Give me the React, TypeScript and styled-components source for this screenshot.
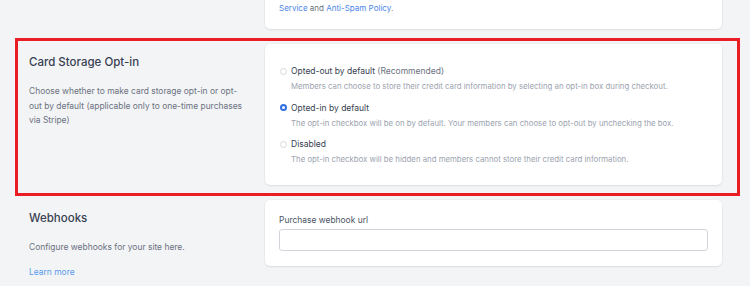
import React from 'react'
import styled, { createGlobalStyle } from 'styled-components'

const GlobalStyle = createGlobalStyle`
  html, body {
    margin: 0;
    padding: 0;
    background: #f3f4f6;
    font-family: Inter, "Noto Sans", sans-serif;
    -webkit-font-smoothing: antialiased;
  }
`

const Page = styled.div`
  width: 750px;
  height: 286px;
  overflow: hidden;
  background: #f3f4f6;
`

const Stack = styled.div`
  display: flex;
  flex-direction: column;
  gap: 15px;
  padding: 0 28px 0 29px;
  margin-top: -15px;
`

const Section = styled.section<{ $highlight?: boolean }>`
  position: relative;
  display: flex;
  align-items: flex-start;

  &::after {
    content: '';
    display: ${(p) => (p.$highlight ? 'block' : 'none')};
    position: absolute;
    top: -6px;
    left: -14px;
    right: -18px;
    bottom: -11px;
    border: 3px solid #ea1c24;
    pointer-events: none;
  }
`

const Aside = styled.div`
  width: 236px;
  flex-shrink: 0;
  padding: 10px 0 0 0;
  box-sizing: border-box;
`

const Title = styled.h3`
  margin: 1px 0 15px;
  font-size: 11.5px;
  font-weight: 500;
  color: #374151;
  line-height: 14px;
`

const AsideText = styled.p`
  max-width: 220px;
  margin: 0 0 4px;
  font-size: 8.45px;
  line-height: 14.5px;
  color: #6b7280;
`

const AsideLink = styled.a`
  font-size: 8.45px;
  line-height: 14px;
  color: #5b9cf0;
  text-decoration: none;
`

const Card = styled.div<{ $pad?: string }>`
  flex: 1;
  background: #fff;
  border-radius: 5px;
  box-shadow: 0 1px 2px rgba(0, 0, 0, 0.08), 0 0 0 1px rgba(0, 0, 0, 0.02);
  padding: ${(p) => p.$pad || '14px'};
`

const Note = styled.p`
  margin: 0;
  font-size: 8px;
  line-height: 13px;
  color: #6b7280;
`

const Blue = styled.a`
  color: #4a86e8;
  text-decoration: none;
`

const Options = styled.div`
  display: flex;
  flex-direction: column;
  gap: 9.5px;
`

const Option = styled.label`
  display: grid;
  grid-template-columns: 12px 1fr;
  row-gap: 4px;
  align-items: center;
`

const Radio = styled.span<{ $checked?: boolean }>`
  width: 7px;
  height: 7px;
  border-radius: 50%;
  box-sizing: border-box;
  margin-left: 1px;
  border: ${(p) => (p.$checked ? '2.2px solid #2f6fe0' : '1px solid #d4d7dc')};
  background: #fff;
`

const OptionLabel = styled.span`
  font-size: 8.5px;
  line-height: 12px;
  color: #374151;
`

const Muted = styled.span`
  color: #6b7280;
`

const OptionHint = styled.span`
  grid-column: 2;
  font-size: 7.8px;
  line-height: 11px;
  color: #9ca3af;
`

const FieldLabel = styled.div`
  font-size: 8.45px;
  line-height: 12px;
  color: #4b5563;
  margin-bottom: 3px;
`

const Input = styled.input`
  display: block;
  width: 100%;
  height: 22px;
  box-sizing: border-box;
  border: 1px solid #d1d5db;
  border-radius: 3px;
  background: #fff;
`

const options = [
  {
    label: 'Opted-out by default',
    extra: ' (Recommended)',
    hint: 'Members can choose to store their credit card information by selecting an opt-in box during checkout.',
  },
  {
    label: 'Opted-in by default',
    hint: 'The opt-in checkbox will be on by default. Your members can choose to opt-out by unchecking the box.',
    checked: true,
  },
  {
    label: 'Disabled',
    hint: 'The opt-in checkbox will be hidden and members cannot store their credit card information.',
  },
]

export default function App() {
  return (
    <Page>
      <GlobalStyle />
      <Stack>
        <Section>
          <Aside />
          <Card $pad="4px 14px 14px">
            <Note>
              Emails are sent through our provider, and by sending them you agree to our Terms of Use, Terms of
              <br />
              <Blue href="#">Service</Blue> and <Blue href="#">Anti-Spam Policy</Blue>.
            </Note>
          </Card>
        </Section>

        <Section $highlight>
          <Aside>
            <Title>Card Storage Opt-in</Title>
            <AsideText>
              Choose whether to make card storage opt-in or opt-out by default (applicable only to one-time
              purchases via Stripe)
            </AsideText>
          </Aside>
          <Card $pad="21px 14px 20px">
            <Options>
              {options.map((o) => (
                <Option key={o.label}>
                  <Radio $checked={o.checked} />
                  <OptionLabel>
                    {o.label}
                    {o.extra && <Muted>{o.extra}</Muted>}
                  </OptionLabel>
                  <OptionHint>{o.hint}</OptionHint>
                </Option>
              ))}
            </Options>
          </Card>
        </Section>

        <Section>
          <Aside>
            <Title>Webhooks</Title>
            <AsideText>Configure webhooks for your site here.</AsideText>
            <AsideLink href="#">Learn more</AsideLink>
          </Aside>
          <Card $pad="14px 14px 15px">
            <FieldLabel>Purchase webhook url</FieldLabel>
            <Input />
          </Card>
        </Section>
      </Stack>
    </Page>
  )
}
